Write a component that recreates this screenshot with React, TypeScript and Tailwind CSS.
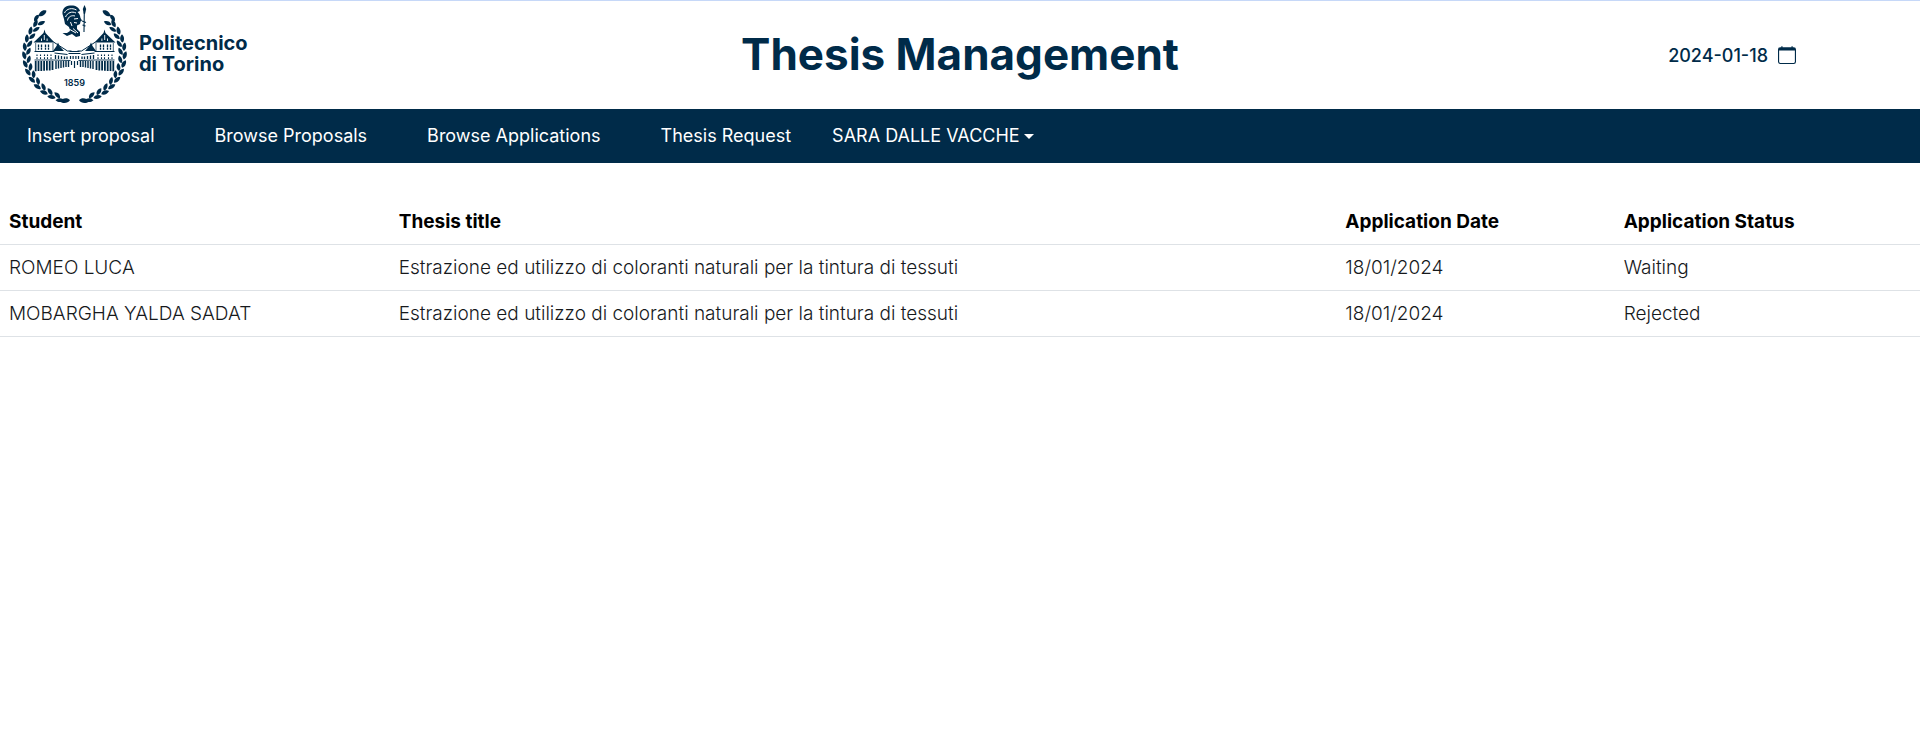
import React from "react";
import { BsCalendar } from "react-icons/bs";

const NAVY = "#002b49";

type Application = { student: string; title: string; date: string; status: string };

const applications: Application[] = [
  {
    student: "ROMEO LUCA",
    title: "Estrazione ed utilizzo di coloranti naturali per la tintura di tessuti",
    date: "18/01/2024",
    status: "Waiting",
  },
  {
    student: "MOBARGHA YALDA SADAT",
    title: "Estrazione ed utilizzo di coloranti naturali per la tintura di tessuti",
    date: "18/01/2024",
    status: "Rejected",
  },
];

const links = ["Insert proposal", "Browse Proposals", "Browse Applications", "Thesis Request"];

const LEAF = "M-4 0C-2.4 -2.7 1.6 -2.8 4 0C1.6 2.2 -2 2.2 -4 0Z";

/* Right half of the laurel wreath, centred on 0,0; the left half mirrors it. */
function Branch() {
  const stations = Array.from({ length: 12 }, (_, i) => 73 - i * 10.2);
  return (
    <g>
      <path d={LEAF} transform="translate(9.5 47) rotate(8) scale(1.25)" />
      {stations.map((deg, i) => {
        const a = (deg * Math.PI) / 180;
        const b = ((deg - 5) * Math.PI) / 180;
        return (
          <g key={i}>
            <path
              d={LEAF}
              transform={`translate(${50.5 * Math.cos(a)} ${48.5 * Math.sin(a)}) rotate(${deg - 75}) scale(1.05)`}
            />
            <path
              d={LEAF}
              transform={`translate(${46.2 * Math.cos(b)} ${44.5 * Math.sin(b)}) rotate(${deg - 120})`}
            />
          </g>
        );
      })}
      <path d={LEAF} transform="translate(32 -40.5) rotate(35) scale(1.2)" />
      <path d={LEAF} transform="translate(38 -36) rotate(55)" />
    </g>
  );
}

/* Right wing of the palace, mirrored for the left one. */
function Wing() {
  return (
    <g>
      <path d="M30 -25.5L31 -22L41 -12.5H20L29 -22Z" />
      <path d="M30.2 -20V-15M27.4 -16.5V-14M33 -16.5V-14" stroke="#fff" strokeWidth="0.9" />
      <path d="M16.5 -12.5L18 -9L21.5 -4H10.5L15 -9Z" />
      <path d="M21 -13L7 -4H3" fill="none" stroke={NAVY} strokeWidth="1" />
      <path d="M21.5 -12V-4M38.8 -12V-4" stroke={NAVY} strokeWidth="0.7" />
      <path
        d="M26 -10.5V-5.2M29 -10.5V-5.2M33 -10.5V-5.2M36 -10.5V-5.2"
        stroke={NAVY}
        strokeWidth="1.3"
        strokeDasharray="2.4 0.7"
      />
      <path d="M20 -3.5H40M7 -0.5L20 -2" fill="none" stroke={NAVY} strokeWidth="1.1" />
      <path
        d="M23.5 -0.5V4M27 -0.5V4M30 -0.5V4M34 -0.5V4M37.5 -0.5V4"
        stroke={NAVY}
        strokeWidth="1.1"
        strokeDasharray="1.6 1.2"
      />
      <path d="M7.5 1.5V4M10 1.5V4M13 1V4M16 0.5V4M19 0V4" stroke={NAVY} strokeWidth="1.3" />
      <path d="M4 5.5L21 5H40" fill="none" stroke={NAVY} strokeWidth="0.9" />
      <path
        d="M6 6V12M8.5 6V12M11 6V12.5M13.5 6V13M16 6V13.5M18.5 6V14"
        stroke={NAVY}
        strokeWidth="1.4"
      />
      <path
        d="M22 6V15M24.8 6V15.4M27.6 6V15.6M30.4 6V15.8M33.2 6V16M36 6V16M38.8 6V16.2"
        stroke={NAVY}
        strokeWidth="1.8"
      />
    </g>
  );
}

function Emblem() {
  return (
    <svg width="110" height="106" viewBox="21 1 110 106" fill={NAVY} aria-hidden="true">
      <g transform="translate(75.5 54)">
        <Branch />
        <g transform="scale(-1 1)">
          <Branch />
        </g>
      </g>
      <g transform="translate(75.5 55)">
        <Wing />
        <g transform="scale(-1 1)">
          <Wing />
        </g>
        <path d="M-5 -3.5H5M-6 -1.5H6" stroke={NAVY} strokeWidth="1" />
        <path d="M-4 1V4M-1.4 1V4M1.4 1V4M4 1V4" stroke={NAVY} strokeWidth="1.2" />
        <path d="M-3 6V10M0 6V13M3 6V10" stroke={NAVY} strokeWidth="1.2" />
      </g>
      {/* helmeted bust with spear */}
      <path d="M63.5 14C63 9 66 6 71 5.5C76 5 80 7 81 11L78.5 12C81 14 81 16 81.5 18L83 20.5L81.5 21.5L81 24L78 25.5L78 29L81 32L81 36L77 37L73 34L68 36L63.5 33L68 33L71 31L70 27L66 24L65 19Z" />
      <path
        d="M65.5 13C67.5 8.5 73 7.5 77.5 10M66.5 17C68.5 12.5 73 11 77 13M68.5 20.5C69 16.5 73 15 76 16M75 19L79 18.5M71.5 22L73 26M75 22.5L78 23M70 29L77 33M74 28.5L79 33"
        fill="none"
        stroke="#fff"
        strokeWidth="1"
      />
      <path d="M85.5 5L87.2 9L86 14H84.8L83.8 9Z" />
      <path d="M85.3 12L85 32M83 21L87 22.5M83.5 25L86.5 26" fill="none" stroke={NAVY} strokeWidth="1.1" />
      <text x="75.5" y="85.5" textAnchor="middle" fontSize="9" fontWeight="600" fontFamily="Inter, sans-serif">
        1859
      </text>
    </svg>
  );
}

export default function App() {
  return (
    <div className="font-[Inter,sans-serif] text-[19px] leading-[29px] text-[#16191c]">
      <header className="grid grid-cols-3 items-center border-t border-[#c6d8f8] bg-white text-[#002b49]">
        <a href="#home" className="flex items-center gap-[9px] pb-[2px] pl-[20px]">
          <Emblem />
          <span className="flex flex-col text-[20px] leading-[21px] font-bold">
            <span>Politecnico</span>
            <span>di Torino</span>
          </span>
        </a>
        <h1 className="pb-[2px] text-center text-[44px] leading-[54px] font-bold whitespace-nowrap">
          Thesis Management
        </h1>
        <div className="flex items-center justify-end gap-[10px] pr-[124px] text-[18px] font-medium">
          <span>2024-01-18</span>
          <button type="button" aria-label="Change date">
            <BsCalendar size={18} />
          </button>
        </div>
      </header>

      <nav className="flex items-center bg-[#002b49] py-3 text-[18px] leading-[30px] text-white">
        {links.map((label) => (
          <a key={label} href="#" className="pr-[33px] pl-[27px] whitespace-nowrap">
            {label}
          </a>
        ))}
        <button type="button" aria-haspopup="menu" className="flex items-center gap-1 px-2 whitespace-nowrap">
          SARA DALLE VACCHE
          <span className="border-x-[5px] border-t-[5px] border-x-transparent border-t-white" />
        </button>
      </nav>

      <main className="pt-9">
        <table className="w-full table-fixed border-collapse text-left">
          <thead>
            <tr className="h-[45px] border-b border-[#dee2e6] text-black">
              <th className="w-[20.3%] px-[9px] font-bold">Student</th>
              <th className="w-[49.3%] px-[9px] font-bold">Thesis title</th>
              <th className="w-[14.5%] px-[9px] font-bold">Application Date</th>
              <th className="px-[9px] font-bold">Application Status</th>
            </tr>
          </thead>
          <tbody className="font-light">
            {applications.map((row) => (
              <tr key={row.student} className="h-[46px] border-b border-[#dee2e6]">
                <td className="px-[9px]">{row.student}</td>
                <td className="px-[9px]">{row.title}</td>
                <td className="px-[9px]">{row.date}</td>
                <td className="px-[9px]">{row.status}</td>
              </tr>
            ))}
          </tbody>
        </table>
      </main>
    </div>
  );
}
